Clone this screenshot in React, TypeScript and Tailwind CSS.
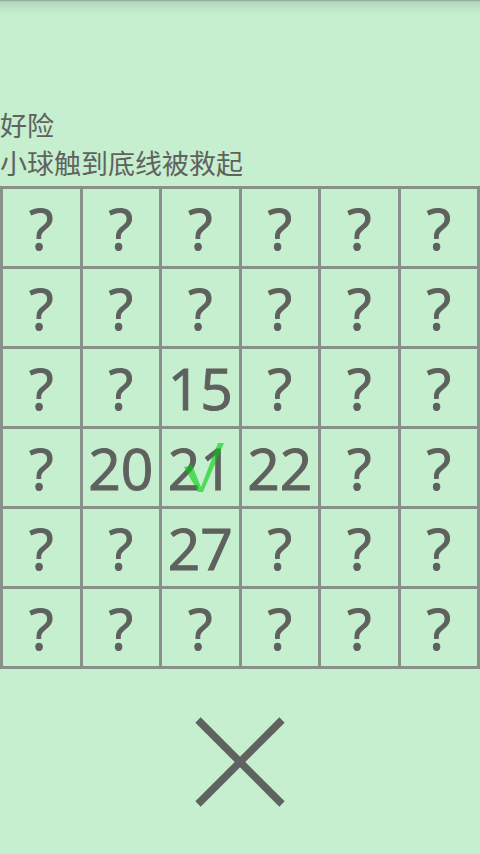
const cells: (string | null)[] = [
  null, null, null, null, null, null,
  null, null, null, null, null, null,
  null, null, '15', null, null, null,
  null, '20', '21', '22', null, null,
  null, null, '27', null, null, null,
  null, null, null, null, null, null,
]

const App: React.FC = () => {
  return (
    <div className="h-[854px] w-[480px] flex flex-col bg-[linear-gradient(to_bottom,#8ea597_0px,#b3d8bd_2px,#c5efce_14px)]">
      {/* Message */}
      <div className="pt-[106px] text-[27px] leading-[38px] text-[#606260] font-['Noto_Sans_CJK_SC',sans-serif]">
        <div>好险</div>
        <div>小球触到底线被救起</div>
      </div>

      {/* Board */}
      <div className="mt-[4px] grid grid-cols-6 gap-[3px] p-[3px] bg-[#89908a]">
        {cells.map((v, i) => (
          <Cell key={i} value={v} checked={i === 20} />
        ))}
      </div>

      {/* Close */}
      <div className="flex-1 flex items-center justify-center">
        <svg width="90" height="90" viewBox="0 0 90 90">
          <path d="M3 3 L87 87 M87 3 L3 87" stroke="#606260" strokeWidth="7.5" />
        </svg>
      </div>
    </div>
  )
}

interface CellProps {
  value: string | null
  checked?: boolean
}

const Cell: React.FC<CellProps> = ({ value, checked }) => (
  <div className="relative h-[77px] bg-[#c5efce] flex items-center justify-center text-[57px] leading-none text-[#5f615f] [-webkit-text-stroke:1px_#5f615f] font-['Open_Sans',sans-serif]">
    <span className="mt-[1px]">{value ?? '?'}</span>
    {checked && (
      <svg
        className="absolute left-[20px] top-[10px]"
        width="42"
        height="54"
        viewBox="0 0 42 54"
      >
        <path
          d="M2 28 L10 26 L19 48 L36 4 L42 4 L21 53 L16 53 Z"
          fill="rgba(0,205,10,0.6)"
        />
      </svg>
    )}
  </div>
)

export default App
